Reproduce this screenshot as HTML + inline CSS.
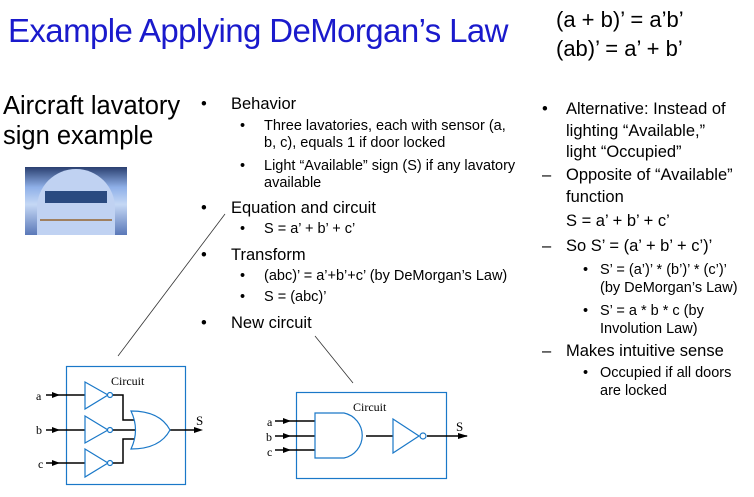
<!DOCTYPE html><html><head><style>
body{margin:0;width:754px;height:497px;background:#fff;position:relative;overflow:hidden;font-family:"Liberation Sans",sans-serif;color:#000}
.a{position:absolute;white-space:nowrap}
.t{font-size:16.5px;line-height:20px}
.s{font-size:14.5px;line-height:17px}
.r{font-size:16.5px;line-height:21.5px}
.ss{font-size:14.5px;line-height:18px}
.b{position:absolute;left:-30px}
.bs{position:absolute;left:-24px}
.b3{position:absolute;left:-17px}
</style></head><body>
<div class="a" style="left:8px;top:12px;font-size:33px;color:#1a1acc;letter-spacing:-0.6px">Example Applying DeMorgan’s Law</div>
<div class="a" style="left:556px;top:5px;font-size:22px;line-height:29px">(a + b)’ = a’b’<br>(ab)’ = a’ + b’</div>
<div class="a" style="left:3px;top:91px;font-size:25.5px;line-height:30px">Aircraft lavatory<br>sign example</div>
<div class="a" style="left:25px;top:167px;width:102px;height:68px;background:linear-gradient(180deg,#2a3f70 0%,#8fb0e8 30%,#c5d8f5 55%,#5a78b8 100%);overflow:hidden">
<div style="position:absolute;left:12px;top:2px;width:78px;height:80px;border-radius:39px 39px 10px 10px;background:#c0d2f2"></div>
<div style="position:absolute;left:20px;top:24px;width:62px;height:12px;background:#2a4a80"></div>
<div style="position:absolute;left:15px;top:52px;width:72px;height:2px;background:#a08060"></div></div>
<div class="a t" style="left:231px;top:94px"><span class="b">•</span>Behavior</div>
<div class="a s" style="left:264px;top:118px"><span class="bs">•</span>Three lavatories, each with sensor (a,<br>b, c), equals 1 if door locked</div>
<div class="a s" style="left:264px;top:158px"><span class="bs">•</span>Light “Available” sign (S) if any lavatory<br>available</div>
<div class="a t" style="left:231px;top:198px"><span class="b">•</span>Equation and circuit</div>
<div class="a s" style="left:264px;top:221px"><span class="bs">•</span>S = a’ + b’ + c’</div>
<div class="a t" style="left:231px;top:245px"><span class="b">•</span>Transform</div>
<div class="a s" style="left:264px;top:268px"><span class="bs">•</span>(abc)’ = a’+b’+c’ (by DeMorgan’s Law)</div>
<div class="a s" style="left:264px;top:289px"><span class="bs">•</span>S = (abc)’</div>
<div class="a t" style="left:231px;top:313px"><span class="b">•</span>New circuit</div>
<div class="a r" style="left:566px;top:99px"><span class="bs">•</span>Alternative: Instead of<br>lighting “Available,”<br>light “Occupied”</div>
<div class="a r" style="left:566px;top:165px"><span class="bs">–</span>Opposite of “Available”<br>function</div>
<div class="a r" style="left:566px;top:211px">S = a’ + b’ + c’</div>
<div class="a r" style="left:566px;top:236px"><span class="bs">–</span>So S’ = (a’ + b’ + c’)’</div>
<div class="a ss" style="left:600px;top:261px"><span class="b3">•</span>S’ = (a’)’ * (b’)’ * (c’)’<br>(by DeMorgan’s Law)</div>
<div class="a ss" style="left:600px;top:302px"><span class="b3">•</span>S’ = a * b * c (by<br>Involution Law)</div>
<div class="a r" style="left:566px;top:341px"><span class="bs">–</span>Makes intuitive sense</div>
<div class="a ss" style="left:600px;top:364px"><span class="b3">•</span>Occupied if all doors<br>are locked</div>
<svg class="a" style="left:0;top:0" width="754" height="497" font-family="Liberation Serif,serif">
<line x1="225" y1="214" x2="118" y2="356" stroke="#333" stroke-width="0.8"/>
<line x1="315" y1="336" x2="353" y2="383" stroke="#333" stroke-width="0.8"/>
<rect x="66.5" y="366.5" width="119" height="118" fill="none" stroke="#1a78c8" stroke-width="1.2"/>
<text x="111" y="385" font-size="12">Circuit</text>
<g stroke="#000" stroke-width="1.5" fill="none">
<line x1="46" y1="395" x2="85" y2="395"/><line x1="46" y1="430" x2="85" y2="430"/><line x1="46" y1="463" x2="85" y2="463"/>
<polyline points="112,395 123,395 123,420 137,420"/><line x1="112" y1="430" x2="140" y2="430"/><polyline points="112,463 123,463 123,439 137,439"/>
<line x1="170" y1="430" x2="200" y2="430"/>
</g>
<g fill="#000"><polygon points="52,392 60,395 52,398"/><polygon points="52,427 60,430 52,433"/><polygon points="52,460 60,463 52,466"/><polygon points="194,427 203,430 194,433"/></g>
<g stroke="#1a78c8" stroke-width="1.2" fill="#fff">
<polygon points="85,382 108,395 85,409"/><circle cx="110" cy="395" r="2.5"/>
<polygon points="85,416 108,430 85,443"/><circle cx="110" cy="430" r="2.5"/>
<polygon points="85,449 108,463 85,477"/><circle cx="110" cy="463" r="2.5"/>
<path d="M131,411 Q140,430 131,449 Q160,449 170,430 Q160,411 131,411 Z"/>
</g>
<text x="36" y="400" font-size="12">a</text><text x="36" y="434" font-size="12">b</text><text x="38" y="468" font-size="12">c</text><text x="196" y="425" font-size="13">S</text>
<rect x="296.5" y="392.5" width="150" height="86" fill="none" stroke="#1a78c8" stroke-width="1.2"/>
<text x="353" y="411" font-size="12">Circuit</text>
<g stroke="#000" stroke-width="1.5" fill="none">
<line x1="275" y1="421" x2="315" y2="421"/><line x1="275" y1="436" x2="315" y2="436"/><line x1="275" y1="450" x2="315" y2="450"/>
<line x1="366" y1="436" x2="393" y2="436"/><line x1="427" y1="436" x2="467" y2="436"/>
</g>
<g fill="#000"><polygon points="283,418 291,421 283,424"/><polygon points="283,433 291,436 283,439"/><polygon points="283,447 291,450 283,453"/><polygon points="458,433 468,436 458,439"/></g>
<g stroke="#1a78c8" stroke-width="1.2" fill="#fff">
<path d="M315,413 H344 A23,23 0 0 1 344,458 H315 Z"/>
<polygon points="393,419 419,436 393,453"/><circle cx="423" cy="436" r="3"/>
</g>
<text x="267" y="426" font-size="12">a</text><text x="266" y="441" font-size="12">b</text><text x="267" y="456" font-size="12">c</text><text x="456" y="431" font-size="13">S</text>
</svg>
</body></html>
